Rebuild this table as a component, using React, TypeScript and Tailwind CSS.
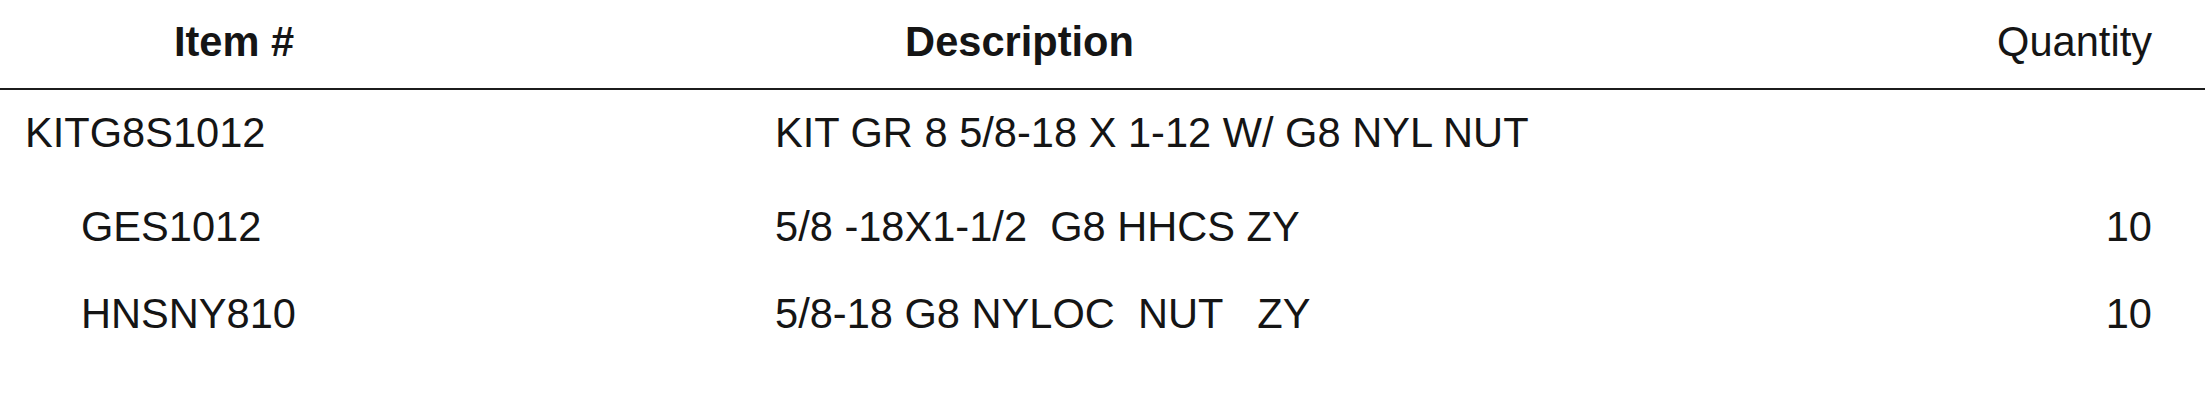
import React from "react";

const rows = [
  { item: "KITG8S1012", desc: "KIT GR 8 5/8-18 X 1-12 W/ G8 NYL NUT", qty: "", indent: false, mt: "mt-[20px]" },
  { item: "GES1012", desc: "5/8 -18X1-1/2  G8 HHCS ZY", qty: "10", indent: true, mt: "mt-[48px]" },
  { item: "HNSNY810", desc: "5/8-18 G8 NYLOC  NUT   ZY", qty: "10", indent: true, mt: "mt-[41px]" },
];

export default function App() {
  return (
    <div
      className="w-[2205px] min-h-[400px] bg-white text-[#151515] text-[41.6px] leading-[46px]"
      style={{ fontFamily: '"Liberation Sans", Arial, sans-serif' }}
    >
      <div className="grid grid-cols-[775px_1fr_auto] pr-[53px] pt-[19px] pb-[23px] border-b-2 border-[#1c1c1c]">
        <div className="w-[468px] text-center font-bold">Item #</div>
        <div className="w-[489px] text-center font-bold">Description</div>
        <div className="text-right">Quantity</div>
      </div>
      {rows.map((r) => (
        <div key={r.item} className={`grid grid-cols-[775px_1fr_auto] pr-[53px] ${r.mt}`}>
          <div className={r.indent ? "pl-[81px]" : "pl-[25px]"}>{r.item}</div>
          <div className="whitespace-pre">{r.desc}</div>
          <div className="text-right">{r.qty}</div>
        </div>
      ))}
    </div>
  );
}
